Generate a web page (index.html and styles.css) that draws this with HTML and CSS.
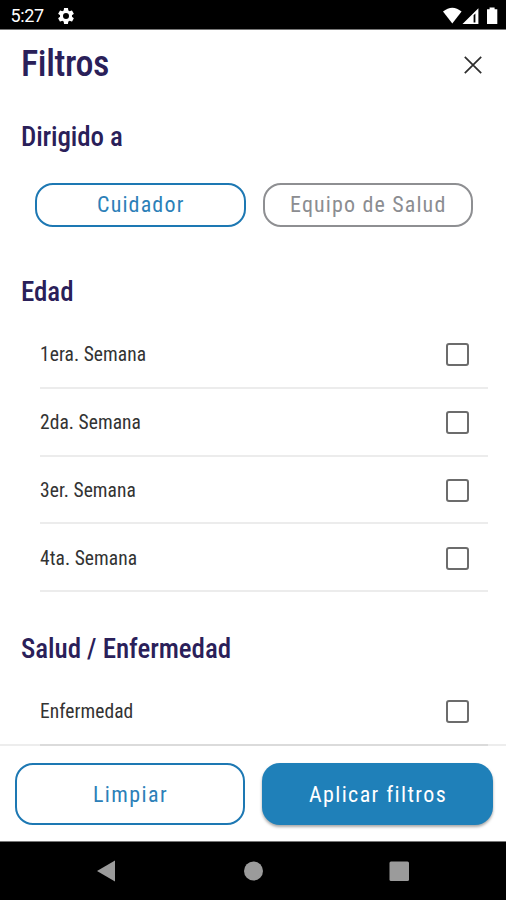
FILE: index.html
```html
<!DOCTYPE html>
<html lang="es">
<head>
<meta charset="utf-8">
<title>Filtros</title>
<link rel="stylesheet" href="styles.css">
</head>
<body>
<div class="screen">
  <div class="status">
    <span class="clock">5:27</span>
    <svg class="gear" width="20" height="20" viewBox="0 0 24 24"><path fill="#fff" d="M19.14 12.94c.04-.3.06-.61.06-.94 0-.32-.02-.64-.07-.94l2.03-1.58c.18-.14.23-.41.12-.61l-1.92-3.32c-.12-.22-.37-.29-.59-.22l-2.39.96c-.5-.38-1.03-.7-1.62-.94l-.36-2.54c-.04-.24-.24-.41-.48-.41h-3.84c-.24 0-.43.17-.47.41l-.36 2.54c-.59.24-1.13.57-1.62.94l-2.39-.96c-.22-.08-.47 0-.59.22L2.74 8.87c-.12.21-.08.47.12.61l2.03 1.58c-.05.3-.09.63-.09.94s.02.64.07.94l-2.03 1.58c-.18.14-.23.41-.12.61l1.92 3.32c.12.22.37.29.59.22l2.39-.96c.5.38 1.03.7 1.62.94l.36 2.54c.05.24.24.41.48.41h3.84c.24 0 .44-.17.47-.41l.36-2.54c.59-.24 1.13-.56 1.62-.94l2.39.96c.22.08.47 0 .59-.22l1.92-3.32c.12-.22.07-.47-.12-.61l-2.01-1.58zM12 15.600A3.600 3.600 0 1 1 12 8.400a3.600 3.600 0 0 1 0 7.200z"/></svg>
    <svg class="signals" width="55" height="18" viewBox="0 0 55 18"><path fill="#fff" d="M0 4.600Q9.300-3.200 18.600 4.600L9.300 16.600Z"/><path fill="#fff" fill-rule="evenodd" d="M19.500 17 35.400 1.200V17ZM30.600 8.200V15.400H32.400V6.400Z"/><path fill="#fff" d="M44 2.300h2.600V.6h5V2.300H54.300V17H44Z"/></svg>
  </div>
  <main class="content">
    <header class="header">
      <h1>Filtros</h1>
      <svg width="18" height="18" viewBox="0 0 18 18"><path stroke="#2e2e2e" stroke-width="1.7" d="M.8.8 17.200 17.200M17.200.8.8 17.200"/></svg>
    </header>
    <h2 class="first">Dirigido a</h2>
    <div class="chips">
      <div class="chip on"><span>Cuidador</span></div>
      <div class="chip"><span>Equipo de Salud</span></div>
    </div>
    <h2 class="age">Edad</h2>
    <ul>
      <li><span>1era. Semana</span><i class="box"></i></li>
      <li><span>2da. Semana</span><i class="box"></i></li>
      <li><span>3er. Semana</span><i class="box"></i></li>
      <li><span>4ta. Semana</span><i class="box"></i></li>
    </ul>
    <h2 class="health">Salud / Enfermedad</h2>
    <ul>
      <li><span>Enfermedad</span><i class="box"></i></li>
    </ul>
  </main>
  <footer class="actions">
    <div class="btn outline"><span>Limpiar</span></div>
    <div class="btn solid"><span>Aplicar filtros</span></div>
  </footer>
  <nav class="nav">
    <svg width="506" height="58" viewBox="0 0 506 58"><g fill="#9b9b9b"><path d="M97 29 115 18.500V39.500Z"/><circle cx="253.500" cy="29" r="9.500"/><rect x="389.500" y="19.500" width="19.500" height="19.500" rx="1.500"/></g></svg>
  </nav>
</div>
</body>
</html>
```
FILE: styles.css
```css
* { box-sizing: border-box; margin: 0; padding: 0; }
body { background: #fff; font-family: "Roboto Condensed", Roboto, sans-serif; font-stretch: 75%; }
.screen { width: 506px; height: 900px; display: flex; flex-direction: column; overflow: hidden; }
.status { height: 30px; flex: none; background: #000; border-bottom: 1px solid #777; display: flex; align-items: center; padding: 2px 8px 0 10.5px; color: #fff; }
.clock { font-family: Roboto, sans-serif; font-size: 18px; font-weight: 400; font-stretch: 100%; width: 45.5px; letter-spacing: -.4px; white-space: nowrap; }
.signals { margin-left: auto; }
.content { flex: none; height: 716px; overflow: hidden; color: #2a2059; }
.header { display: flex; align-items: center; justify-content: space-between; height: 69px; padding: 0 24px 0 21px; }
h1 { font-size: 36px; font-weight: 500; line-height: 69px; letter-spacing: -.4px; }
h2 { font-size: 27px; font-weight: 500; line-height: 36px; height: 36px; padding-left: 21px; letter-spacing: -.05px; white-space: nowrap; }
.first { margin-top: 20px; letter-spacing: -.12px; }
.chips { display: flex; gap: 17px; padding: 28px 33px 0 35px; }
.chip { flex: 1; height: 44px; border: 2px solid #8e8f92; border-radius: 18px; color: #8b8d91; display: flex; align-items: center; justify-content: center; font-size: 22px; font-weight: 400; letter-spacing: 1.15px; line-height: 38px; padding: 0 0 1px 1px; white-space: nowrap; }
.chip.on { border-color: #1d78b3; color: #2c80b8; }
.age { margin-top: 47px; }
.health { margin-top: 39px; }
ul { list-style: none; padding: 11px 18px 0 40px; }
li { height: 67.75px; display: flex; align-items: center; justify-content: space-between; padding: 2px 19px 0 0; border-bottom: 2px solid #ececec; color: #333; font-size: 19.5px; font-weight: 400; letter-spacing: .06px; white-space: nowrap; }
.box { width: 23px; height: 23px; border: 2px solid #6c6c6c; border-radius: 3px; }
.actions { flex: none; height: 98px; margin-top: -2px; border-top: 2px solid rgba(0,0,0,.07); border-bottom: 1px solid #777; display: grid; grid-template-columns: 230px 231px; gap: 17px; padding: 17px 13px 0 15px; }
.btn { height: 62px; border-radius: 18px; display: flex; align-items: center; justify-content: center; font-size: 22px; font-weight: 400; letter-spacing: 1.4px; padding-left: 1px; white-space: nowrap; }
.outline { border: 2px solid #1d78b3; color: #2c80b8; }
.solid { background: #1f80b9; color: #fff; letter-spacing: 1.4px; box-shadow: 0 2px 3px rgba(0,0,0,.35); }
.nav { height: 58px; flex: none; background: #000; }
.nav svg { display: block; }
```
